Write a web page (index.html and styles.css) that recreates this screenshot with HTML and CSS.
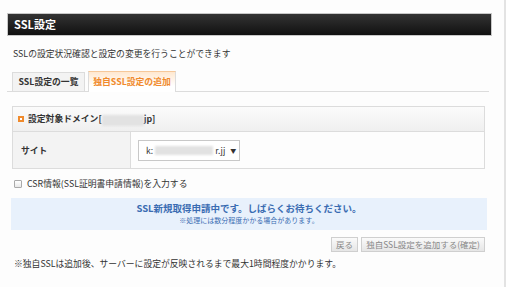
FILE: index.html
```html
<!DOCTYPE html>
<html lang="ja">
  <head>
    <meta charset="UTF-8" />
    <title>SSL設定</title>
    <link rel="stylesheet" href="styles.css">
  </head>
  <body>
    <div class="page">
      <h1 class="title-bar">SSL設定</h1>
      <p class="desc">SSLの設定状況確認と設定の変更を行うことができます</p>

      <ul class="tabs">
        <li class="tab">SSL設定の一覧</li>
        <li class="tab active">独自SSL設定の追加</li>
      </ul>

      <div class="panel">
        <div class="panel-head">
          <span class="mark"></span>
          <span>設定対象ドメイン[<span class="blur blur-domain"></span>jp]</span>
        </div>
        <div class="panel-row">
          <div class="label">サイト</div>
          <div class="value">
            <div class="select">
              <span>k:</span><span class="blur blur-site"></span><span>r.jj</span>
              <span class="arrow">▼</span>
            </div>
          </div>
        </div>
      </div>

      <label class="check"><span class="box"></span>CSR情報(SSL証明書申請情報)を入力する</label>

      <div class="notice">
        <p class="notice-main">SSL新規取得申請中です。しばらくお待ちください。</p>
        <p class="notice-sub">※処理には数分程度かかる場合があります。</p>
      </div>

      <div class="actions">
        <button class="btn">戻る</button>
        <button class="btn">独自SSL設定を追加する(確定)</button>
      </div>

      <p class="foot">※独自SSLは追加後、サーバーに設定が反映されるまで最大1時間程度かかります。</p>
    </div>
  </body>
</html>
```

FILE: styles.css
```css
* {
  margin: 0;
  padding: 0;
  box-sizing: border-box;
}

body {
  font-family: "Noto Sans CJK JP", "Liberation Sans", sans-serif;
  font-size: 8.8px;
  color: #333;
  background-color: #fff;
}

.page {
  width: 506px;
  height: 287px;
  padding-top: 13px;
  border-right: 2px solid #e3e3e3;
  background-color: #fdfdfd;
}

.title-bar {
  margin: 0 12px 0 7px;
  height: 23px;
  padding-left: 6px;
  border: 1px solid #c8c8c8;
  background: linear-gradient(#333, #111);
  color: #fff;
  font-size: 11px;
  font-weight: bold;
  line-height: 21px;
}

.desc {
  margin: 11px 0 0 13px;
  line-height: 14px;
}

.tabs {
  list-style-type: none;
  display: flex;
  align-items: flex-end;
  gap: 3px;
  margin: 10px 15px 0 7px;
  padding-left: 5px;
  border-bottom: 1px solid #dcdcdc;
  height: 21px;
}

.tab {
  height: 19px;
  width: 73px;
  text-align: center;
  line-height: 18px;
  font-weight: bold;
  border: 1px solid #dcdcdc;
  border-bottom: none;
  background-color: #f3f3f3;
  color: #333;
}

.tab.active {
  height: 21px;
  width: 88px;
  margin-bottom: -1px;
  line-height: 20px;
  color: #f08a2c;
  background: linear-gradient(#ffe8d0, #fff 70%);
  border-top-color: #f6c89a;
}

.panel {
  margin: 14px 19px 0 12px;
  border: 1px solid #dcdcdc;
}

.panel-head {
  display: flex;
  align-items: center;
  gap: 4px;
  height: 25px;
  padding-left: 5px;
  background: linear-gradient(#fbfbfb, #efefef);
  border-bottom: 1px solid #dcdcdc;
  font-weight: bold;
}

.mark {
  width: 6px;
  height: 6px;
  border: 2px solid #f08a2c;
  background-color: #fff;
}

.blur {
  display: inline-block;
  vertical-align: middle;
  background-color: #e2e2e2;
  filter: blur(1px);
}

.blur-domain {
  width: 42px;
  height: 11px;
}

.panel-row {
  display: flex;
  height: 36px;
}

.label {
  width: 118px;
  padding-left: 8px;
  display: flex;
  align-items: center;
  background-color: #f3f3f3;
  border-right: 1px solid #dcdcdc;
  font-weight: bold;
}

.value {
  display: flex;
  align-items: center;
  padding-left: 7px;
}

.select {
  display: flex;
  align-items: center;
  width: 102px;
  height: 21px;
  padding-left: 7px;
  border: 1px solid #c8c8c8;
  background-color: #fff;
  font-size: 8.5px;
}

.blur-site {
  width: 58px;
  height: 9px;
  margin: 0 2px;
}

.arrow {
  margin-left: 5px;
  font-size: 6px;
}

.check {
  display: flex;
  align-items: center;
  gap: 5px;
  margin: 9px 0 0 14px;
  line-height: 12px;
}

.box {
  width: 8px;
  height: 8px;
  border: 1px solid #aaa;
  border-radius: 1px;
  background: linear-gradient(#fff, #e8e8e8);
}

.notice {
  margin: 8px 17px 0 11px;
  height: 32px;
  padding-top: 4px;
  background-color: #e8f1fc;
  text-align: center;
  color: #3a6cb2;
}

.notice-main {
  font-size: 9.5px;
  font-weight: bold;
  line-height: 13px;
}

.notice-sub {
  font-size: 7px;
  line-height: 10px;
}

.actions {
  display: flex;
  justify-content: flex-end;
  gap: 3px;
  margin: 7px 19px 0 0;
}

.btn {
  font-family: inherit;
  font-size: 8.5px;
  color: #888;
  height: 15px;
  padding: 0 4px;
  line-height: 13px;
  border: 1px solid #cfcfcf;
  background: linear-gradient(#fafafa, #e6e6e6);
}

.foot {
  margin: 6px 0 0 14px;
  line-height: 12px;
}
```
